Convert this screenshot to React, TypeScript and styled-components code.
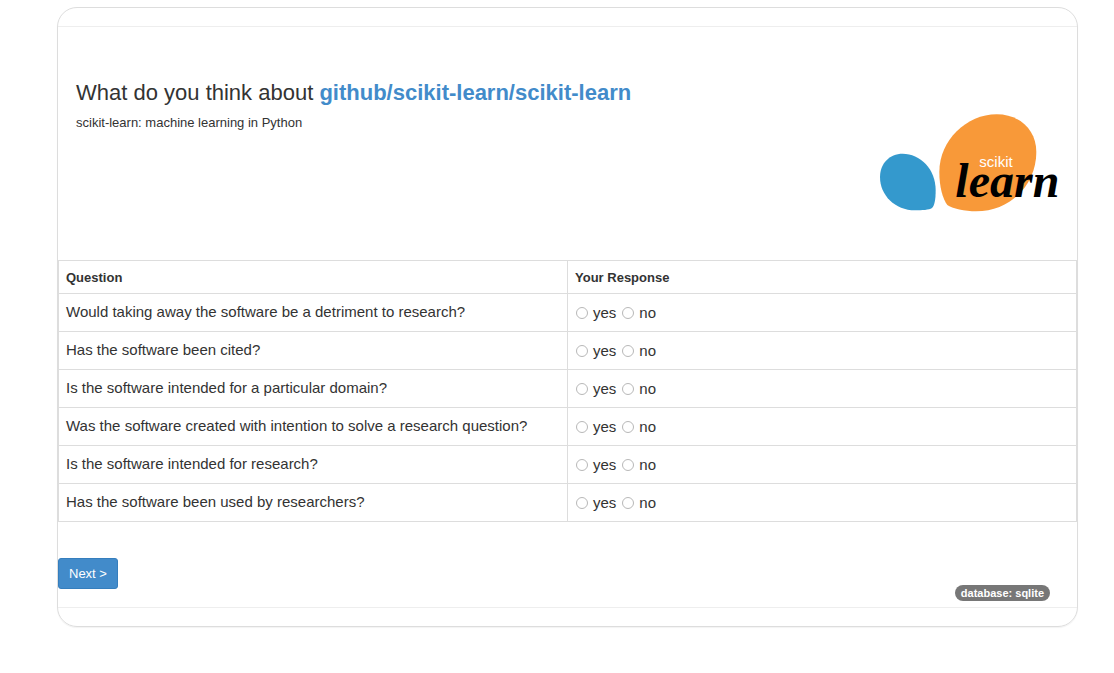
import React from "react";
import styled, { createGlobalStyle } from "styled-components";

const GlobalStyle = createGlobalStyle`
  *, *::before, *::after { box-sizing: border-box; }
  body {
    margin: 0;
    background: #fff;
    color: #333;
    font: 13px/18px "Liberation Sans", Arial, sans-serif;
  }
`;

const Page = styled.main`
  padding: 7px 36px 46px 57px;
`;

const Card = styled.form`
  border: 1px solid #ddd;
  border-radius: 20px;
  box-shadow: 0 1px 1px rgba(0, 0, 0, 0.05);
  padding: 18px 0;
`;

const Body = styled.div`
  border-top: 1px solid #eee;
  border-bottom: 1px solid #eee;
`;

const Header = styled.header`
  display: flex;
  justify-content: space-between;
  gap: 24px;
  padding: 53px 17px 48px 18px;
`;

const Title = styled.h1`
  margin: 0 0 9px;
  font-size: 22px;
  line-height: 25px;
  font-weight: 400;
`;

const RepoLink = styled.a`
  color: #428bca;
  font-weight: 700;
  text-decoration: none;
`;

const Description = styled.p`
  margin: 0;
`;

const Logo = styled.svg`
  flex: none;
  width: 180px;
  height: 98px;
  margin-top: 34px;
  overflow: visible;
`;

const Table = styled.table`
  width: 100%;
  table-layout: fixed;
  border-collapse: collapse;
`;

const HeadCell = styled.th`
  height: 33px;
  padding: 2px 7px 0;
  border: 1px solid #ddd;
  text-align: left;
  vertical-align: middle;
`;

const Cell = styled.td`
  padding: 7px 7px 8px;
  border: 1px solid #ddd;
  font-size: 15px;
  line-height: 21px;
  vertical-align: top;
`;

const Choices = styled.div`
  display: flex;
  gap: 5px;
  padding-top: 1px;
`;

const Choice = styled.label`
  display: flex;
  align-items: center;
  gap: 5px;
`;

const Radio = styled.input`
  appearance: none;
  width: 12px;
  height: 12px;
  margin: 0 0 0 1px;
  border: 1px solid #b8b8b8;
  border-radius: 50%;
  background: #fff;

  &:checked {
    background: radial-gradient(circle, #444 3px, #fff 4px);
  }
`;

const Footer = styled.footer`
  display: flex;
  justify-content: space-between;
  align-items: flex-start;
  padding: 36px 27px 6px 0;
`;

const NextButton = styled.button`
  height: 31px;
  padding: 0 10px;
  border: 1px solid #357ebd;
  border-radius: 3px;
  background: #428bca;
  color: #fff;
  font: inherit;
  cursor: pointer;
`;

const Badge = styled.span`
  margin-top: 27px;
  padding: 0 6px;
  border-radius: 8px;
  background: #777;
  color: #fff;
  font-size: 11px;
  line-height: 16px;
  font-weight: 700;
`;

const questions = [
  "Would taking away the software be a detriment to research?",
  "Has the software been cited?",
  "Is the software intended for a particular domain?",
  "Was the software created with intention to solve a research question?",
  "Is the software intended for research?",
  "Has the software been used by researchers?",
];

function ScikitLogo() {
  return (
    <Logo viewBox="30 41 540 294" role="img" aria-label="scikit learn">
      <path
        fill="#3499cd"
        d="M30 230C30 190 58 160 98 160C150 160 197 205 197 270C197 300 193 317 186 323C177 329 156 330 135 330C75 330 30 285 30 230Z"
      />
      <path
        fill="#f89939"
        d="M208 215C208 120 290 42 380 42C450 42 499 90 499 155C499 250 425 333 318 333C285 333 246 325 232 314C218 295 208 260 208 215Z"
      />
      <text x="328" y="200" fill="#fff" fontSize="45" fontFamily="Liberation Sans, Arial, sans-serif">
        scikit
      </text>
      <text
        x="256"
        y="290"
        fill="#000"
        fontSize="144"
        fontWeight="700"
        fontStyle="italic"
        fontFamily="Liberation Serif, Times New Roman, serif"
      >
        learn
      </text>
    </Logo>
  );
}

export default function App() {
  return (
    <>
      <GlobalStyle />
      <Page>
        <Card onSubmit={(event: React.FormEvent) => event.preventDefault()}>
          <Body>
            <Header>
              <div>
                <Title>
                  What do you think about{" "}
                  <RepoLink href="#repo">github/scikit-learn/scikit-learn</RepoLink>
                </Title>
                <Description>scikit-learn: machine learning in Python</Description>
              </div>
              <ScikitLogo />
            </Header>
            <Table>
              <thead>
                <tr>
                  <HeadCell scope="col">Question</HeadCell>
                  <HeadCell scope="col">Your Response</HeadCell>
                </tr>
              </thead>
              <tbody>
                {questions.map((question, index) => (
                  <tr key={question}>
                    <Cell id={`question-${index}`}>{question}</Cell>
                    <Cell>
                      <Choices role="radiogroup" aria-labelledby={`question-${index}`}>
                        {["yes", "no"].map((answer) => (
                          <Choice key={answer}>
                            <Radio type="radio" name={`answer-${index}`} value={answer} />
                            {answer}
                          </Choice>
                        ))}
                      </Choices>
                    </Cell>
                  </tr>
                ))}
              </tbody>
            </Table>
            <Footer>
              <NextButton type="submit">Next &gt;</NextButton>
              <Badge>database: sqlite</Badge>
            </Footer>
          </Body>
        </Card>
      </Page>
    </>
  );
}
